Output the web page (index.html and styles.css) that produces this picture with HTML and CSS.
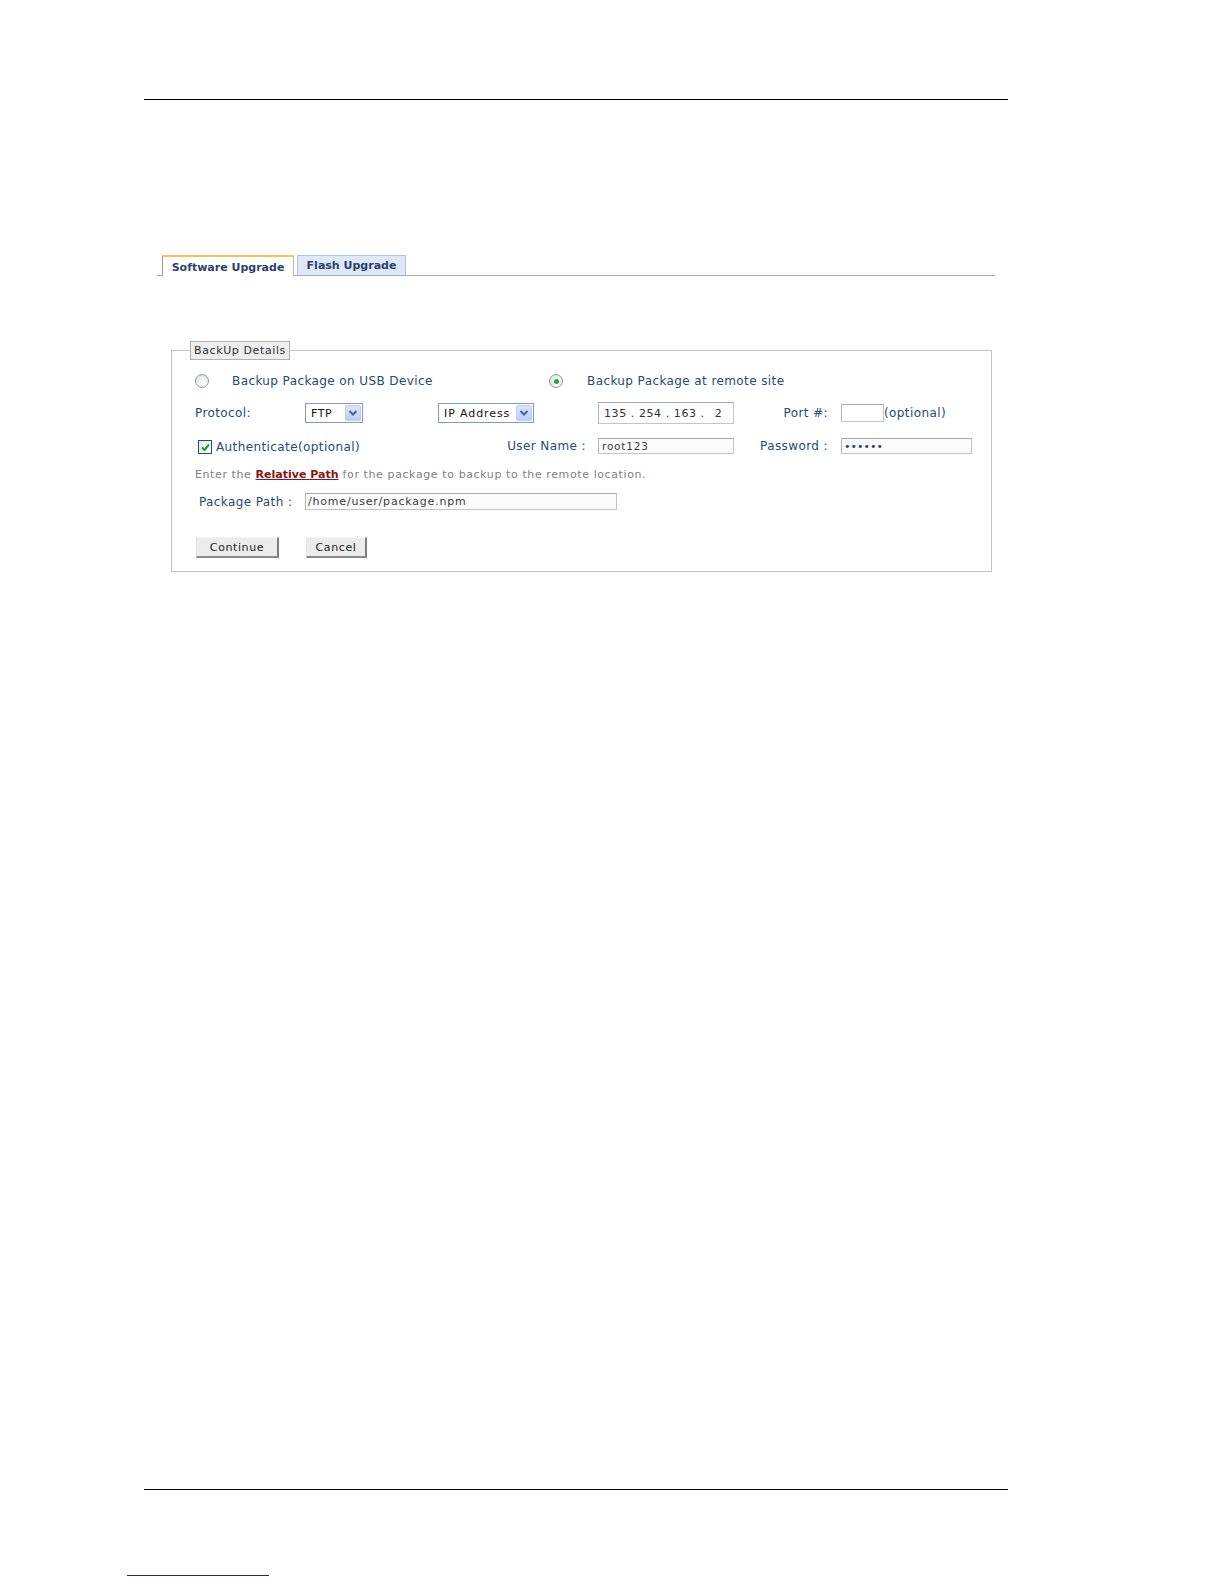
FILE: index.html
```html
<!DOCTYPE html>
<html>
<head>
<meta charset="utf-8">
<title>Software Upgrade</title>
<link rel="stylesheet" href="styles.css">
</head>
<body>
<div class="page">
  <div class="rule rule-top"></div>

  <div class="tabs">
    <div class="tab tab-active">Software Upgrade</div>
    <div class="tab tab-idle">Flash Upgrade</div>
  </div>

  <fieldset class="box">
    <legend class="legend"><span class="legend-text">BackUp Details</span></legend>
    <div class="inner">
      <div class="row row-radio">
        <div class="opt opt-usb"><span class="radio"></span><span class="lbl">Backup Package on USB Device</span></div>
        <div class="opt opt-remote"><span class="radio checked"></span><span class="lbl">Backup Package at remote site</span></div>
      </div>

      <div class="row grid row-proto">
        <span class="lbl">Protocol:</span>
        <div class="select sel-ftp">
          <span class="sel-text">FTP</span>
          <span class="arrow"><svg width="10" height="8" viewBox="0 0 10 8"><polyline points="1.5,2 5,5.5 8.5,2" fill="none" stroke="#4f6290" stroke-width="2"/></svg></span>
        </div>
        <div class="select sel-ip">
          <span class="sel-text">IP Address</span>
          <span class="arrow"><svg width="10" height="8" viewBox="0 0 10 8"><polyline points="1.5,2 5,5.5 8.5,2" fill="none" stroke="#4f6290" stroke-width="2"/></svg></span>
        </div>
        <div class="input in-ip"><span>135</span><span class="dot">.</span><span>254</span><span class="dot">.</span><span>163</span><span class="dot">.</span><span class="last">2</span></div>
        <span class="lbl right">Port #:</span>
        <div class="port-wrap"><div class="input in-port"></div><span class="lbl">(optional)</span></div>
      </div>

      <div class="row grid row-auth">
        <div class="auth">
          <span class="check"><svg width="11" height="11" viewBox="0 0 11 11"><polyline points="2,5.5 4.5,8 9,2.5" fill="none" stroke="#21a121" stroke-width="2"/></svg></span>
          <span class="lbl">Authenticate(optional)</span>
        </div>
        <span class="lbl right user-lbl">User Name :</span>
        <div class="input in-text in-user">root123</div>
        <span class="lbl right">Password :</span>
        <div class="input in-text in-pass">&#8226;&#8226;&#8226;&#8226;&#8226;&#8226;</div>
      </div>

      <p class="hint">Enter the <a class="rel" href="#">Relative Path</a> for the package to backup to the remote location.</p>

      <div class="row row-path">
        <span class="lbl path-lbl">Package Path :</span>
        <div class="input in-text in-path">/home/user/package.npm</div>
      </div>

      <div class="row row-buttons">
        <button class="btn btn-continue" type="button">Continue</button>
        <button class="btn btn-cancel" type="button">Cancel</button>
      </div>
    </div>
  </fieldset>

  <div class="rule rule-bottom"></div>
  <div class="footer-link-line"></div>
</div>
</body>
</html>
```

FILE: styles.css
```css
html, body {
  margin: 0;
  padding: 0;
  background: #ffffff;
}

body {
  font-family: "DejaVu Sans", Verdana, sans-serif;
  font-size: 12px;
  letter-spacing: 0.4px;
  color: #264a72;
}

.page {
  width: 1224px;
  min-height: 1584px;
  box-sizing: border-box;
  overflow: hidden;
}

.rule {
  border-top: 1px solid #000;
  height: 0;
}

.rule-top {
  margin: 99px 0 0 144px;
  width: 864px;
}

/* Tabs */
.tabs {
  display: flex;
  align-items: flex-end;
  margin: 155px 0 0 157px;
  width: 838px;
  height: 20px;
  border-bottom: 1px solid #a6a9c6;
}

.tab {
  box-sizing: border-box;
  display: flex;
  align-items: center;
  justify-content: center;
  font-weight: bold;
  font-size: 11px;
  letter-spacing: 0;
  color: #2f3f6c;
}

.tab-active {
  margin-left: 5px;
  width: 132px;
  height: 21px;
  margin-bottom: -1px;
  background: #ffffff;
  border-top: 2px solid #f0c65a;
  border-left: 1px solid #9a9a9a;
  border-right: 1px solid #b4b8c8;
  padding-top: 1px;
}

.tab-idle {
  margin-left: 3px;
  width: 109px;
  height: 20px;
  background: #dde8f8;
  border: 1px solid #b2c2dc;
  border-bottom: none;
}

/* Fieldset */
.box {
  margin: 65px 0 0 171px;
  padding: 0;
  width: 821px;
  box-sizing: border-box;
  border: 1px solid #c4c4c4;
  min-width: 0;
}

.legend {
  margin-left: 18px;
  padding: 0;
  width: 100px;
  height: 19px;
  box-sizing: border-box;
  background: #eeeeee;
  border: 1px solid #b0b0b0;
  display: flex;
  align-items: center;
  justify-content: center;
}

.legend-text {
  font-size: 11px;
  letter-spacing: 0.6px;
  color: #333333;
}

.inner {
  padding: 10px 0 13px 23px;
}

.row {
  display: flex;
  align-items: center;
}

.grid {
  display: grid;
  grid-template-columns: 110px 133px 160px 148px 95px 1fr;
  align-items: center;
}

.lbl {
  white-space: nowrap;
}

.right {
  text-align: right;
  padding-right: 13px;
}

/* radios */
.row-radio {
  height: 22px;
}

.opt {
  display: flex;
  align-items: center;
}

.opt-usb {
  width: 354px;
  margin-left: 0;
}

.opt-usb .radio {
  margin-right: 23px;
}

.opt-remote .radio {
  margin-right: 24px;
}

.radio {
  width: 14px;
  height: 14px;
  box-sizing: border-box;
  border-radius: 50%;
  border: 1px solid #8e99a8;
  background: radial-gradient(circle at 60% 60%, #ffffff 0%, #f2f2f2 40%, #d4d4d4 100%);
  display: inline-flex;
  align-items: center;
  justify-content: center;
}

.radio.checked::after {
  content: "";
  width: 5px;
  height: 5px;
  border-radius: 50%;
  background: #2aa53a;
}

/* protocol row */
.row-proto {
  margin-top: 10px;
  height: 22px;
}

.select {
  box-sizing: border-box;
  height: 20px;
  border: 1px solid #7f9db9;
  background: #ffffff;
  display: flex;
  align-items: center;
  justify-content: space-between;
  padding: 0 1px 0 5px;
  font-size: 11px;
  letter-spacing: 0.6px;
  color: #111111;
}

.sel-ftp {
  width: 58px;
}

.sel-ip {
  width: 96px;
  letter-spacing: 0.9px;
}

.arrow {
  width: 16px;
  height: 16px;
  box-sizing: border-box;
  border: 1px solid #bccdf3;
  border-radius: 2px;
  background: linear-gradient(#dae4fb, #bccdf6);
  display: flex;
  align-items: center;
  justify-content: center;
}

.input {
  box-sizing: border-box;
  border: 1px solid #c5c5c5;
  border-top-color: #a9a9a9;
  border-left-color: #b5b5b5;
  background: #ffffff;
  font-size: 11px;
  color: #333333;
  display: flex;
  align-items: center;
}

.in-ip {
  width: 136px;
  height: 22px;
  padding-left: 5px;
  letter-spacing: 0.6px;
}

.in-ip .dot {
  margin: 0 4px;
}

.in-ip .last {
  margin-left: 6px;
}

.port-wrap {
  display: flex;
  align-items: center;
}

.in-port {
  width: 43px;
  height: 18px;
  background: #ffffff;
}

/* auth row */
.row-auth {
  margin-top: 11px;
  height: 22px;
}

.auth {
  grid-column: 1 / 3;
  display: flex;
  align-items: center;
  margin-left: 3px;
  padding-top: 2px;
}

.check {
  width: 14px;
  height: 14px;
  box-sizing: border-box;
  border: 1px solid #1c5180;
  background: linear-gradient(135deg, #e6e6e0, #ffffff);
  display: inline-flex;
  align-items: center;
  justify-content: center;
  margin-right: 4px;
}

.user-lbl {
  padding-right: 12px;
}

.in-text {
  height: 16px;
  background: #fbfbfb;
  padding-left: 3px;
  font-size: 10.5px;
  letter-spacing: 0.8px;
  color: #3c3c3c;
}

.in-user {
  width: 136px;
}

.in-pass {
  width: 131px;
  font-size: 11px;
  letter-spacing: 0;
  padding-left: 2px;
  color: #34466a;
}

/* hint */
.hint {
  margin: 10px 0 0;
  height: 16px;
  line-height: 16px;
  font-size: 11px;
  letter-spacing: 0.6px;
  color: #808080;
  white-space: nowrap;
}

.rel {
  color: #8b1414;
  font-weight: bold;
  letter-spacing: 0;
  text-decoration: underline;
}

/* path */
.row-path {
  margin-top: 8px;
  height: 21px;
}

.path-lbl {
  width: 106px;
  margin-left: 4px;
}

.in-path {
  width: 312px;
  height: 17px;
  font-size: 11px;
  padding-left: 2px;
}

/* buttons */
.row-buttons {
  margin-top: 25px;
  height: 21px;
}

.btn {
  box-sizing: border-box;
  height: 21px;
  margin: 0;
  padding: 0;
  font-family: "DejaVu Sans", Verdana, sans-serif;
  font-size: 11px;
  letter-spacing: 0.6px;
  color: #222222;
  background: #ececec;
  border-top: 1px solid #f4f4f4;
  border-left: 1px solid #e4e4e4;
  border-right: 2px solid #7c7c7c;
  border-bottom: 2px solid #8a8a8a;
  border-radius: 0;
}

.btn-continue {
  width: 83px;
  margin-left: 1px;
}

.btn-cancel {
  width: 61px;
  margin-left: 27px;
}

.rule-bottom {
  margin: 917px 0 0 144px;
  width: 864px;
}

.footer-link-line {
  margin: 85px 0 0 127px;
  width: 142px;
  border-top: 1px solid #1c2596;
}
```
